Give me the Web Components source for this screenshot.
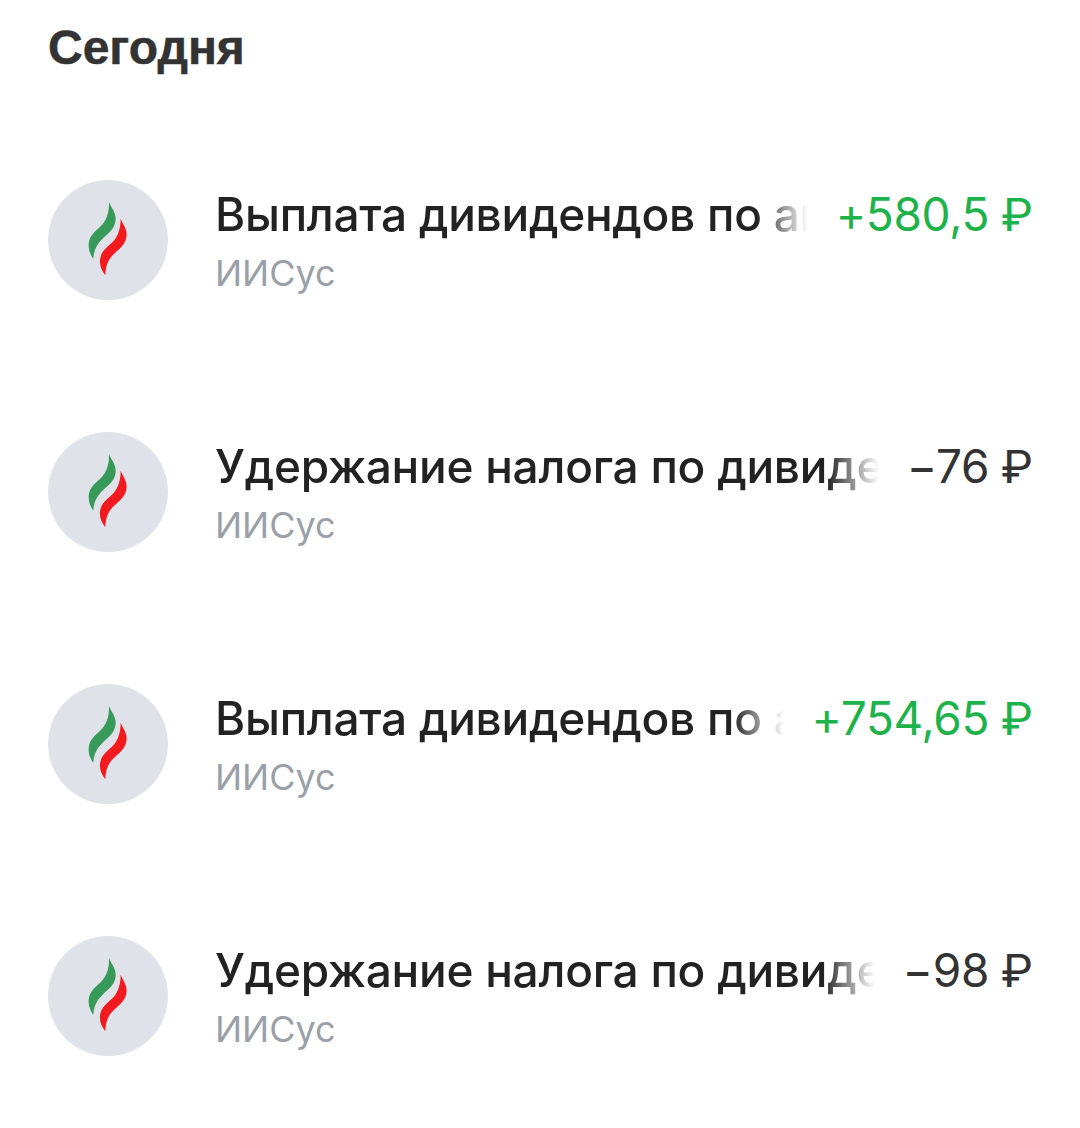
<!DOCTYPE html>
<html lang="ru">
<head>
<meta charset="utf-8">
<title>Сегодня</title>
<style>
html, body {
	margin: 0;
	background: #fff;
}
body {
	font-family: Inter, "Liberation Sans", sans-serif;
}
</style>
</head>
<body>
<op-day title="Сегодня">
	<op-row name="Выплата дивидендов по ак" account="ИИСус" amount="+580,5" income></op-row>
	<op-row name="Удержание налога по дивиде" account="ИИСус" amount="−76"></op-row>
	<op-row name="Выплата дивидендов по а" account="ИИСус" amount="+754,65" income></op-row>
	<op-row name="Удержание налога по дивиде" account="ИИСус" amount="−98"></op-row>
</op-day>
<script>
class OpDay extends HTMLElement{

	connectedCallback(){

		this.attachShadow({mode: "open"});

		this.shadowRoot.innerHTML = `
<style>
:host {
	display: block;
	padding: 21px 48px 0;
}
h2 {
	margin: 0 0 105px;
	font: 700 48px/54px "Liberation Sans", Arial, sans-serif;
	color: #333333;
	-webkit-text-stroke: 0.5px #333333;
}
.rows {
	display: flex;
	flex-direction: column;
	gap: 132px;
}
</style>
<h2>${this.getAttribute("title")}</h2>
<div class="rows"><slot></slot></div>
		`;

	}

}

class OpLogo extends HTMLElement{

	connectedCallback(){

		this.attachShadow({mode: "open"});

		// Traced from the reference at 3x, hence the viewBox offset
		this.shadowRoot.innerHTML = `
<style>
:host {
	display: block;
	flex: none;
	width: 120px;
	height: 120px;
	border-radius: 50%;
	background: #dfe2e8;
}
svg {
	display: block;
}
</style>
<svg width="120" height="120" viewBox="24 30 360 360">
	<path fill="#379a58" d="M207 96C213 112 227 126 227 147C227 171 210 186 193 201C177 216 162 232 160 266C151 254 145 240 146 222C148 197 165 185 182 169C197 154 208 132 207 96Z"/>
	<path fill="#f01a1f" d="M242 146C248 162 260 174 260 195C259 219 242 234 225 249C209 263 197 280 196 316C186 303 178 288 180 270C182 246 198 234 215 219C230 205 242 182 242 146Z"/>
</svg>
		`;

	}

}

class OpRow extends HTMLElement{

	connectedCallback(){

		this.attachShadow({mode: "open"});

		const amountColor = this.hasAttribute("income") ? "#1db24a" : "#333333";

		this.shadowRoot.innerHTML = `
<style>
:host {
	display: flex;
	align-items: center;
	gap: 48px;
	height: 120px;
}
.body {
	flex: 1;
	min-width: 0;
}
.top {
	display: flex;
	gap: 28px;
	height: 56px;
	margin-left: -1px;
	font-size: 46px;
	line-height: 56px;
	white-space: nowrap;
}
.name {
	flex: 1;
	min-width: 0;
	overflow: hidden;
	font-weight: 450;
	letter-spacing: -0.25px;
	color: #222222;
	-webkit-mask-image: linear-gradient(to left, transparent 0, #000 52px);
	mask-image: linear-gradient(to left, transparent 0, #000 52px);
}
.amount {
	flex: none;
	letter-spacing: -0.3px;
	color: ${amountColor};
}
.rub {
	font-family: Roboto, sans-serif;
}
.account {
	margin-top: 9px;
	margin-left: -1px;
	font-size: 36px;
	line-height: 44px;
	color: #9a9fa8;
}
</style>
<op-logo></op-logo>
<div class="body">
	<div class="top">
		<div class="name">${this.getAttribute("name")}</div>
		<div class="amount">${this.getAttribute("amount")} <span class="rub">₽</span></div>
	</div>
	<div class="account">${this.getAttribute("account")}</div>
</div>
		`;

	}

}

customElements.define("op-logo", OpLogo);
customElements.define("op-row", OpRow);
customElements.define("op-day", OpDay);
</script>
</body>
</html>
